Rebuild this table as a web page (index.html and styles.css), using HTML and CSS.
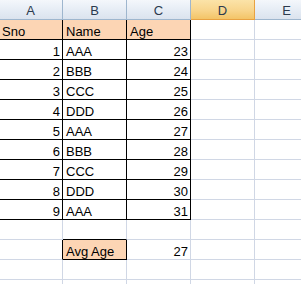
FILE: index.html
```html
<!DOCTYPE html>
<html>
<head>
<meta charset="utf-8">
<link rel="stylesheet" href="styles.css">
</head>
<body>
<div class="viewport">
<div class="sheet">
  <div class="hdr">A</div><div class="hdr">B</div><div class="hdr">C</div><div class="hdr sel">D</div><div class="hdr">E</div>

  <div class="c fill b-r b-b">Sno</div><div class="c fill b-r b-b">Name</div><div class="c fill b-r b-b">Age</div><div class="c"></div><div class="c"></div>

  <div class="c num b-r b-b">1</div><div class="c b-r b-b">AAA</div><div class="c num b-r b-b">23</div><div class="c"></div><div class="c"></div>
  <div class="c num b-r b-b">2</div><div class="c b-r b-b">BBB</div><div class="c num b-r b-b">24</div><div class="c"></div><div class="c"></div>
  <div class="c num b-r b-b">3</div><div class="c b-r b-b">CCC</div><div class="c num b-r b-b">25</div><div class="c"></div><div class="c"></div>
  <div class="c num b-r b-b">4</div><div class="c b-r b-b">DDD</div><div class="c num b-r b-b">26</div><div class="c"></div><div class="c"></div>
  <div class="c num b-r b-b">5</div><div class="c b-r b-b">AAA</div><div class="c num b-r b-b">27</div><div class="c"></div><div class="c"></div>
  <div class="c num b-r b-b">6</div><div class="c b-r b-b">BBB</div><div class="c num b-r b-b">28</div><div class="c"></div><div class="c"></div>
  <div class="c num b-r b-b">7</div><div class="c b-r b-b">CCC</div><div class="c num b-r b-b">29</div><div class="c"></div><div class="c"></div>
  <div class="c num b-r b-b">8</div><div class="c b-r b-b">DDD</div><div class="c num b-r b-b">30</div><div class="c"></div><div class="c"></div>
  <div class="c num b-r b-b">9</div><div class="c b-r b-b">AAA</div><div class="c num b-r b-b">31</div><div class="c"></div><div class="c"></div>

  <div class="c"></div><div class="c b-b"></div><div class="c"></div><div class="c"></div><div class="c"></div>

  <div class="c b-r"></div><div class="c fill b-r b-b">Avg Age</div><div class="c num">27</div><div class="c"></div><div class="c"></div>

  <div class="c"></div><div class="c"></div><div class="c"></div><div class="c"></div><div class="c"></div>
  <div class="c"></div><div class="c"></div><div class="c"></div><div class="c"></div><div class="c"></div>
</div>
</div>
</body>
</html>
```

FILE: styles.css
```css
html, body {
  margin: 0;
  padding: 0;
  background: #ffffff;
  overflow: hidden;
}

.viewport {
  width: 301px;
  height: 284px;
  overflow: hidden;
}

.sheet {
  display: grid;
  grid-template-columns: repeat(5, 64px);
  grid-auto-rows: 20px;
  margin-left: -1px;
  font-family: "Liberation Sans", Arial, sans-serif;
  font-size: 13px;
  color: #000000;
}

.hdr {
  box-sizing: border-box;
  border-right: 1px solid #9eb6ce;
  border-bottom: 1px solid #9eb6ce;
  background: linear-gradient(#f4f7fb, #e4ebf4 60%, #dbe3ee);
  color: #2b3a4e;
  display: flex;
  align-items: center;
  justify-content: center;
  line-height: 15px;
  padding-top: 1px;
}

.hdr.sel {
  background: linear-gradient(#fbe3a8, #f8d58c 55%, #f3c467);
  border-bottom-color: #e8a242;
  border-right-color: #e8a242;
}

.c {
  box-sizing: border-box;
  border-right: 1px solid #d0d7e5;
  border-bottom: 1px solid #d0d7e5;
  display: flex;
  align-items: flex-end;
  padding: 0 3px 0 3px;
  line-height: 15px;
  white-space: nowrap;
  overflow: hidden;
}

.num {
  justify-content: flex-end;
  padding-right: 2px;
}

.fill {
  background: #fcd5b4;
}

.b-r {
  border-right-color: #000000;
}

.b-b {
  border-bottom-color: #000000;
}
```
